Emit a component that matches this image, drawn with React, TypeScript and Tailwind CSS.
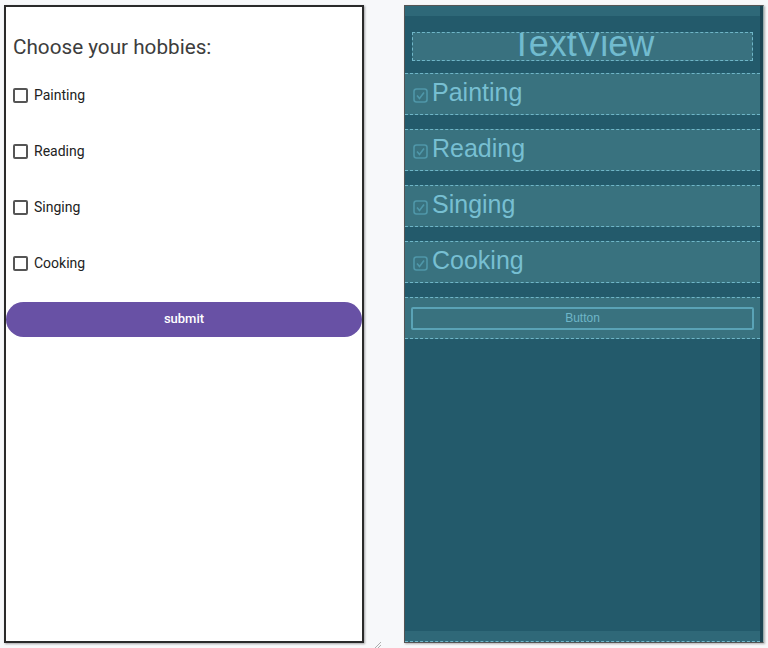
import React from "react";

const hobbies = ["Painting", "Reading", "Singing", "Cooking"];

function BlueCheck() {
  return (
    <svg width="15" height="15" viewBox="0 0 15 15" className="shrink-0 mt-[3px]">
      <rect x="1" y="1" width="13" height="13" rx="2.5" fill="none" stroke="#4f97a9" strokeWidth="1.6" />
      <path d="M4 7.5 L6.5 10.5 L11 4.5" fill="none" stroke="#4f97a9" strokeWidth="1.6" />
    </svg>
  );
}

function DesignPanel() {
  return (
    <div className="w-[360px] h-[638px] border-2 border-[#2a2a2a] bg-white shadow-[1px_1px_2px_rgba(0,0,0,0.35)] flex flex-col" style={{ fontFamily: "Roboto, sans-serif" }}>
      <div className="mt-[26px] h-[29px] pl-[7px] text-[20.7px] leading-[29px] text-[#3d3d3d]">
        Choose your hobbies:
      </div>
      <div className="mt-[12px] flex flex-col gap-[14px]">
        {hobbies.map((h) => (
          <div key={h} className="h-[42px] flex items-center pl-[7px] gap-[6px]">
            <div className="w-[15px] h-[15px] border-2 border-[#555] rounded-[2px]" />
            <span className="text-[14px] text-[#222]">{h}</span>
          </div>
        ))}
        <div className="h-[42px] flex items-center">
          <button className="w-full h-[35px] rounded-full bg-[#6851a5] text-white text-[13px] font-medium">
            submit
          </button>
        </div>
      </div>
    </div>
  );
}

function BlueprintPanel() {
  return (
    <div className="ml-[1px] w-[360px] h-[638px] border-[1.5px] border-[#555] bg-[#235a6b] shadow-[1px_1px_2px_rgba(0,0,0,0.3)] flex flex-col border-r-[#9aa]" style={{ fontFamily: "'Liberation Sans', Arial, sans-serif" }}>
      <div className="flex-1 flex flex-col border-r-[3px] border-[#1b4553]">
        <div className="h-[10px] bg-[#2e6878]" />
        <div className="mt-[16px] mx-[7px] h-[29px] border border-dashed border-[#6fb6c8] bg-[#39717f] overflow-hidden text-center text-[36px] leading-[22px] text-[#71bbcf]">
          TextView
        </div>
        <div className="mt-[12px] flex flex-col gap-[14px]">
          {hobbies.map((h) => (
            <div key={h} className="h-[42px] flex items-center pl-[8px] gap-[4px] bg-[#39727f] border-y border-dashed border-[#6fb6c8]">
              <BlueCheck />
              <span className="text-[25px] leading-none text-[#77bfd2] -mt-[4px]">{h}</span>
            </div>
          ))}
          <div className="h-[42px] flex items-center px-[6px] bg-[#39727f] border-y border-dashed border-[#6fb6c8]">
            <div className="w-full h-[23px] border-2 border-[#5aa3b6] rounded-[2px] flex items-center justify-center text-[12px] text-[#6fb6c8]">
              Button
            </div>
          </div>
        </div>
        <div className="flex-1" />
        <div className="h-[11px] bg-[#2f6878] border-b border-dashed border-[#6fb6c8]" />
      </div>
    </div>
  );
}

export default function App() {
  return (
    <div className="w-[768px] h-[648px] bg-[#f7f8fa] overflow-hidden relative">
      <div className="flex pt-[5px] pl-[4px] gap-[39px]">
        <DesignPanel />
        <BlueprintPanel />
      </div>
      <svg className="absolute left-[374px] top-[641px]" width="8" height="8" viewBox="0 0 8 8">
        <path d="M1 7 L7 1 M4 7 L7 4" stroke="#9a9a9a" strokeWidth="0.8" />
      </svg>
    </div>
  );
}
